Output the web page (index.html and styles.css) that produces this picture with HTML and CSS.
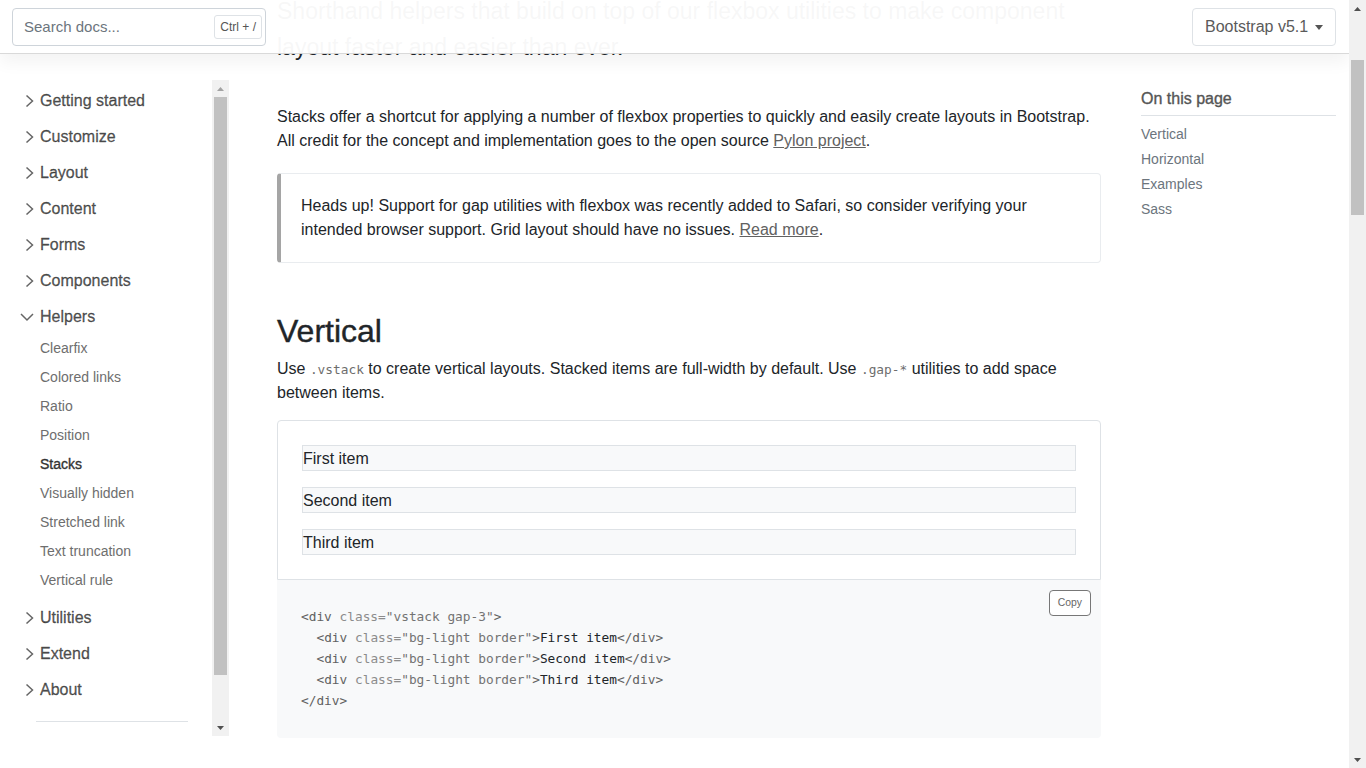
FILE: index.html
```html
<!DOCTYPE html>
<html lang="en">
<head>
<meta charset="utf-8">
<title>Stacks · Bootstrap v5.1</title>
<link rel="stylesheet" href="styles.css">
</head>
<body>
<div class="window">
  <div class="viewport">
    <header class="topbar">
      <div class="search">
        <span class="search-placeholder">Search docs...</span>
        <kbd class="search-kbd">Ctrl + /</kbd>
      </div>
      <button class="version" type="button"><span>Bootstrap v5.1</span><span class="caret"></span></button>
    </header>

    <div class="layout">
      <aside class="sidebar">
        <nav class="side-links">
          <ul class="groups">
            <li><button class="group" type="button"><svg class="chev" viewBox="0 0 20 16"><path d="M6.5 2.5L12.5 8L6.5 13.5"/></svg>Getting started</button></li>
            <li><button class="group" type="button"><svg class="chev" viewBox="0 0 20 16"><path d="M6.5 2.5L12.5 8L6.5 13.5"/></svg>Customize</button></li>
            <li><button class="group" type="button"><svg class="chev" viewBox="0 0 20 16"><path d="M6.5 2.5L12.5 8L6.5 13.5"/></svg>Layout</button></li>
            <li><button class="group" type="button"><svg class="chev" viewBox="0 0 20 16"><path d="M6.5 2.5L12.5 8L6.5 13.5"/></svg>Content</button></li>
            <li><button class="group" type="button"><svg class="chev" viewBox="0 0 20 16"><path d="M6.5 2.5L12.5 8L6.5 13.5"/></svg>Forms</button></li>
            <li><button class="group" type="button"><svg class="chev" viewBox="0 0 20 16"><path d="M6.5 2.5L12.5 8L6.5 13.5"/></svg>Components</button></li>
            <li>
              <button class="group" type="button"><svg class="chev" viewBox="0 0 20 16"><path d="M1 5L7 11L13 5"/></svg>Helpers</button>
              <ul class="sub">
                <li><a href="#">Clearfix</a></li>
                <li><a href="#">Colored links</a></li>
                <li><a href="#">Ratio</a></li>
                <li><a href="#">Position</a></li>
                <li><a href="#" class="active">Stacks</a></li>
                <li><a href="#">Visually hidden</a></li>
                <li><a href="#">Stretched link</a></li>
                <li><a href="#">Text truncation</a></li>
                <li><a href="#">Vertical rule</a></li>
              </ul>
            </li>
            <li><button class="group" type="button"><svg class="chev" viewBox="0 0 20 16"><path d="M6.5 2.5L12.5 8L6.5 13.5"/></svg>Utilities</button></li>
            <li><button class="group" type="button"><svg class="chev" viewBox="0 0 20 16"><path d="M6.5 2.5L12.5 8L6.5 13.5"/></svg>Extend</button></li>
            <li><button class="group" type="button"><svg class="chev" viewBox="0 0 20 16"><path d="M6.5 2.5L12.5 8L6.5 13.5"/></svg>About</button></li>
            <li class="divider"></li>
          </ul>
        </nav>
        <div class="scrollbar">
          <span class="sb-btn"><svg viewBox="0 0 7 4"><polygon class="tri-light" points="0,4 3.5,0 7,4"/></svg></span>
          <div class="sb-track"><div class="sb-thumb side-thumb"></div></div>
          <span class="sb-btn"><svg viewBox="0 0 7 4"><polygon points="0,0 7,0 3.5,4"/></svg></span>
        </div>
      </aside>

      <main class="content">
        <p class="lead">Shorthand helpers that build on top of our flexbox utilities to make component layout faster and easier than ever.</p>
        <p class="text">Stacks offer a shortcut for applying a number of flexbox properties to quickly and easily create layouts in Bootstrap. All credit for the concept and implementation goes to the open source <a href="#">Pylon project</a>.</p>

        <div class="callout">
          <p>Heads up! Support for gap utilities with flexbox was recently added to Safari, so consider verifying your intended browser support. Grid layout should have no issues. <a href="#">Read more</a>.</p>
        </div>

        <h2 class="section-title">Vertical</h2>
        <p class="text text-tight">Use <code>.vstack</code> to create vertical layouts. Stacked items are full-width by default. Use <code>.gap-*</code> utilities to add space between items.</p>

        <div class="example">
          <div class="vstack">
            <div class="item">First item</div>
            <div class="item">Second item</div>
            <div class="item">Third item</div>
          </div>
        </div>
        <div class="highlight">
          <button class="copy" type="button">Copy</button>
<pre><code><span class="nt">&lt;div</span> <span class="na">class=</span><span class="s">"vstack gap-3"</span><span class="nt">&gt;</span>
  <span class="nt">&lt;div</span> <span class="na">class=</span><span class="s">"bg-light border"</span><span class="nt">&gt;</span>First item<span class="nt">&lt;/div&gt;</span>
  <span class="nt">&lt;div</span> <span class="na">class=</span><span class="s">"bg-light border"</span><span class="nt">&gt;</span>Second item<span class="nt">&lt;/div&gt;</span>
  <span class="nt">&lt;div</span> <span class="na">class=</span><span class="s">"bg-light border"</span><span class="nt">&gt;</span>Third item<span class="nt">&lt;/div&gt;</span>
<span class="nt">&lt;/div&gt;</span></code></pre>
        </div>
      </main>

      <aside class="toc">
        <strong class="toc-title">On this page</strong>
        <ul>
          <li><a href="#">Vertical</a></li>
          <li><a href="#">Horizontal</a></li>
          <li><a href="#">Examples</a></li>
          <li><a href="#">Sass</a></li>
        </ul>
      </aside>
    </div>
  </div>

  <div class="scrollbar page-scrollbar">
    <span class="sb-btn"><svg viewBox="0 0 7 4"><polygon points="0,4 3.5,0 7,4"/></svg></span>
    <div class="sb-track"><div class="sb-thumb page-thumb"></div></div>
    <span class="sb-btn"><svg viewBox="0 0 7 4"><polygon points="0,0 7,0 3.5,4"/></svg></span>
  </div>
</div>
</body>
</html>
```

FILE: styles.css
```css
* { box-sizing: border-box; }

html, body {
  margin: 0;
  padding: 0;
}

body {
  font-family: "Liberation Sans", Arial, sans-serif;
  font-size: 16px;
  line-height: 1.5;
  color: #212529;
  background: #fff;
  overflow: hidden;
}

.window {
  display: flex;
  width: 1366px;
  height: 768px;
}

.viewport {
  position: relative;
  flex: 1;
  overflow: hidden;
}

/* ---------- top bar ---------- */
.topbar {
  position: absolute;
  top: 0;
  left: 0;
  right: 0;
  z-index: 10;
  height: 54px;
  display: flex;
  align-items: center;
  justify-content: space-between;
  padding: 0 13px 0 12px;
  background: rgba(255, 255, 255, 0.965);
  box-shadow: 0 8px 16px rgba(0, 0, 0, 0.05), inset 0 -1px 0 rgba(0, 0, 0, 0.15);
}

.search {
  width: 254px;
  height: 38px;
  display: flex;
  align-items: center;
  justify-content: space-between;
  padding: 0 3px 0 11px;
  background: #fff;
  border: 1px solid #ced4da;
  border-radius: 4px;
}

.search-placeholder {
  color: #6c757d;
  font-size: 15px;
}

.search-kbd {
  font-family: "Liberation Sans", Arial, sans-serif;
  font-size: 12px;
  line-height: 18px;
  padding: 2px 5px;
  color: #555;
  background: #fff;
  border: 1px solid #dee2e6;
  border-radius: 3px;
}

.version {
  width: 144px;
  height: 38px;
  display: flex;
  align-items: center;
  justify-content: space-between;
  padding: 0 12px;
  font: inherit;
  color: #5a5a5a;
  background: #fff;
  border: 1px solid #dee2e6;
  border-radius: 4px;
}

.caret {
  width: 0;
  height: 0;
  border-top: 5px solid #555;
  border-left: 4.5px solid transparent;
  border-right: 4.5px solid transparent;
}

/* ---------- layout ---------- */
.layout {
  display: flex;
  align-items: flex-start;
}

/* ---------- sidebar ---------- */
.sidebar {
  display: flex;
  width: 229px;
  height: 656px;
  margin-top: 80px;
  flex: none;
}

.side-links {
  flex: 1;
  overflow: hidden;
  padding: 5px 0 0 12px;
}

.groups,
.sub {
  list-style: none;
  margin: 0;
  padding: 0;
}

.groups > li {
  margin-bottom: 4px;
}

.group {
  display: flex;
  align-items: center;
  padding: 4px 8px;
  font: inherit;
  font-weight: 400;
  line-height: 24px;
  color: rgba(0, 0, 0, 0.66);
  -webkit-text-stroke: 0.35px rgba(0, 0, 0, 0.66);
  background: none;
  border: 0;
}

.chev {
  width: 20px;
  height: 16px;
  flex: none;
  fill: none;
  stroke: #666;
  stroke-width: 1.5;
}

.sub {
  padding-bottom: 4px;
  font-size: 14px;
  line-height: 21px;
}

.sub a {
  display: block;
  width: fit-content;
  margin: 2px 0 0 20px;
  padding: 3px 8px;
  color: #6e6e6e;
  text-decoration: none;
}

.sub a.active {
  color: #333;
  -webkit-text-stroke: 0.35px #333;
}

.groups > li.divider {
  margin: 15px 24px 0;
  border-top: 1px solid #dee2e6;
}

/* ---------- scrollbars ---------- */
.scrollbar {
  display: flex;
  flex-direction: column;
  width: 17px;
  flex: none;
  background: #f1f1f1;
}

.sb-btn {
  height: 17px;
  flex: none;
  display: flex;
  align-items: center;
  justify-content: center;
}

.sb-btn svg {
  width: 7px;
  height: 4px;
  fill: #505050;
}

.sb-btn .tri-light {
  fill: #a3a3a3;
}

.sb-track {
  flex: 1;
  padding: 0 2px;
}

.sb-thumb {
  background: #c1c1c1;
}

.side-thumb {
  height: 578px;
}

.page-thumb {
  margin-top: 43px;
  height: 155px;
}

/* ---------- main content ---------- */
.content {
  width: 824px;
  margin-left: 48px;
  flex: none;
}

.lead {
  margin: -7px 0 40px;
  font-size: 23px;
  font-weight: 300;
  line-height: 36px;
}

.text {
  margin: 0 0 16px;
}

.text-tight {
  margin-bottom: 15px;
}

.content a {
  color: #616161;
  text-decoration: underline;
}

.callout {
  margin: 20px 0;
  padding: 20px;
  border: 1px solid #e9ecef;
  border-left: 4px solid #a5a5a5;
  border-radius: 4px;
}

.callout p {
  margin: 0;
}

.section-title {
  margin: 49px 0 7px;
  font-size: 32px;
  font-weight: 500;
  line-height: 1.2;
  -webkit-text-stroke: 0.4px #212529;
}

code {
  font-family: "DejaVu Sans Mono", "Liberation Mono", monospace;
  font-size: 12.8px;
  line-height: 1;
  color: #6d6d6d;
}

.example {
  padding: 24px;
  border: 1px solid #dee2e6;
  border-radius: 4px 4px 0 0;
}

.vstack {
  display: flex;
  flex-direction: column;
  gap: 16px;
}

.item {
  padding-top: 1px;
  background: #f8f9fa;
  border: 1px solid #dee2e6;
  line-height: 23px;
}

.highlight {
  position: relative;
  padding: 26px 24px 27px;
  background: #f8f9fa;
  border-radius: 0 0 4px 4px;
}

.highlight pre {
  margin: 0;
  font-family: "DejaVu Sans Mono", "Liberation Mono", monospace;
  font-size: 12.8px;
  line-height: 21px;
}

.highlight code {
  font-size: 12.8px;
  line-height: 21px;
  color: #212529;
}

.nt { color: #616161; }
.na { color: #8c8c8c; }
.s  { color: #737373; }

.copy {
  position: absolute;
  top: 10px;
  right: 10px;
  padding: 4px 8px;
  font-family: "Liberation Sans", Arial, sans-serif;
  font-size: 10.4px;
  line-height: 1.5;
  color: #666;
  background: #fff;
  border: 1px solid #777;
  border-radius: 4px;
}

/* ---------- table of contents ---------- */
.toc {
  width: 195px;
  margin: 81px 0 0 40px;
  flex: none;
}

.toc-title {
  display: block;
  margin: 8px 0;
  padding-bottom: 7px;
  font-weight: 400;
  line-height: 19.2px;
  color: #555;
  -webkit-text-stroke: 0.35px #555;
  border-bottom: 1px solid #dee2e6;
}

.toc ul {
  list-style: none;
  margin: 0;
  padding: 0;
  font-size: 14px;
  line-height: 21px;
}

.toc li {
  margin-bottom: 4px;
}

.toc a {
  color: #6c757d;
  text-decoration: none;
}
```
